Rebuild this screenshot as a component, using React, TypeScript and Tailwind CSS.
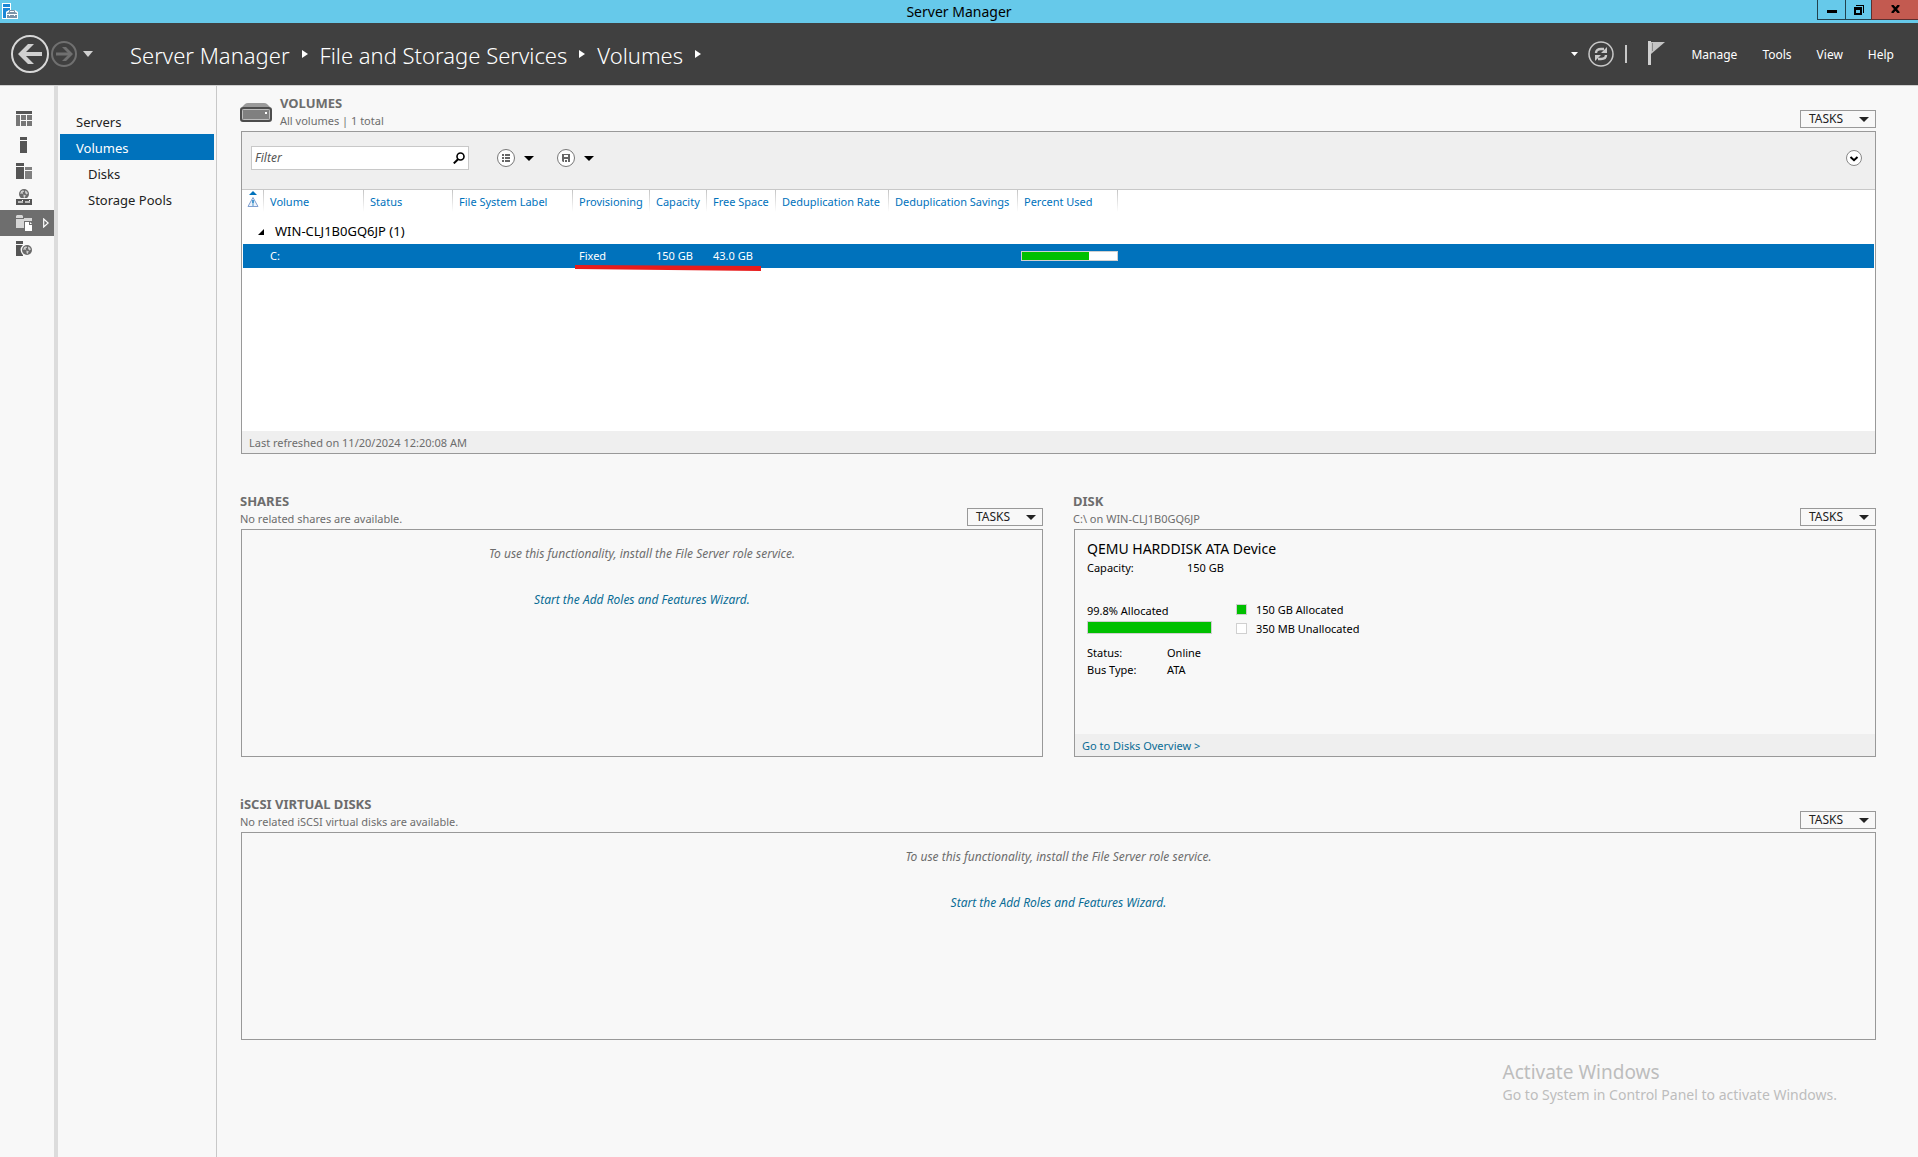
import React from 'react'

interface NavItem {
  label: string
  nested?: boolean
  active?: boolean
}

const navItems: NavItem[] = [
  { label: 'Servers' },
  { label: 'Volumes', active: true },
  { label: 'Disks', nested: true },
  { label: 'Storage Pools', nested: true },
]

const breadcrumbs = ['Server Manager', 'File and Storage Services', 'Volumes']

const menus = ['Manage', 'Tools', 'View', 'Help']

const columns = [
  { label: 'Volume', width: 'w-[100px]' },
  { label: 'Status', width: 'w-[89px]' },
  { label: 'File System Label', width: 'w-[120px]' },
  { label: 'Provisioning', width: 'w-[77px]' },
  { label: 'Capacity', width: 'w-[57px]' },
  { label: 'Free Space', width: 'w-[69px]' },
  { label: 'Deduplication Rate', width: 'w-[113px]' },
  { label: 'Deduplication Savings', width: 'w-[129px]' },
  { label: 'Percent Used', width: 'w-[100px]' },
]

const volume = {
  name: 'C:',
  provisioning: 'Fixed',
  capacity: '150 GB',
  freeSpace: '43.0 GB',
  percentUsed: 71,
}

const Caret = ({ className = '' }: { className?: string }) => (
  <svg width="10" height="5" viewBox="0 0 10 5" className={className} fill="currentColor">
    <path d="M0 0h10L5 5z" />
  </svg>
)

const Globe = ({ cx, cy, r }: { cx: number; cy: number; r: number }) => (
  <g>
    <circle cx={cx} cy={cy} r={r} fill="#6a6a6a" />
    <path
      transform={`translate(${cx - 5} ${cy - 5})`}
      d="M2 2.2l2.2-1 1 1.3-1.6 1L4 5 2.6 4.6 1.2 5zM6 1.6l2.2 1.2.6 2-1.4.6L6.2 4zM4.4 5.4l2.4.8L5.6 9l-1-.8z"
      fill="#cfcfcf"
    />
  </g>
)

const DashboardIcon = () => (
  <svg width="16" height="16" viewBox="0 0 16 16">
    <path d="M0 0h16v3H0z" fill="#555" />
    <path d="M0 4h4v11H0zM5 4h5v5H5zM11 4h5v5h-5zM5 10h5v5H5zM11 10h5v5h-5z" fill="#777" />
  </svg>
)

const LocalServerIcon = () => (
  <svg width="16" height="16" viewBox="0 0 16 16" fill="#555">
    <path d="M4 0h7v3H4zM4 4h7v12H4z" />
  </svg>
)

const AllServersIcon = () => (
  <svg width="16" height="16" viewBox="0 0 16 16">
    <path d="M0 0h8v3H0zM0 4h8v12H0z" fill="#555" />
    <path d="M9 4h7v3H9zM9 8h7v8H9z" fill="#808080" />
  </svg>
)

const DhcpIcon = () => (
  <svg width="16" height="16" viewBox="0 0 16 16">
    <Globe cx={8} cy={5} r={5} />
    <path d="M0 9h16v7H0z" fill="#f8f8f8" />
    <path d="M0 10h16v6H0z" fill="#555" />
    <path d="M2 12h5v2H2zM9 12h5v2H9z" fill="#bbb" />
    <path d="M6 11h1v1H6zM13 11h1v1h-1z" fill="#fff" />
  </svg>
)

const FileStorageIcon = () => (
  <svg width="16" height="16" viewBox="0 0 16 16">
    <path d="M0 1l1-1h5l1 1v2H0zM0 4h8V3h8v10H0z" fill="#d6d6d6" />
    <path d="M8 6h8v10H8z" fill="#6e6e6e" />
    <path d="M9 7h4v3h3v6H9z" fill="#fff" />
    <path d="M14 7l2 2h-2z" fill="#fff" />
  </svg>
)

const RemoteIcon = () => (
  <svg width="16" height="16" viewBox="0 0 16 16">
    <path d="M0 0h7v3H0zM0 4h7v11H0z" fill="#555" />
    <circle cx="11" cy="9" r="6.4" fill="#f8f8f8" />
    <Globe cx={11} cy={9} r={5} />
  </svg>
)

const railItems = [
  { label: 'Dashboard', Icon: DashboardIcon },
  { label: 'Local Server', Icon: LocalServerIcon },
  { label: 'All Servers', Icon: AllServersIcon },
  { label: 'DHCP', Icon: DhcpIcon },
  { label: 'File and Storage Services', Icon: FileStorageIcon, active: true },
  { label: 'Remote Services', Icon: RemoteIcon },
]

const TitleBar = () => (
  <div className="grid h-[23px] grid-cols-[1fr_auto_1fr] bg-[#66c9ea]">
    <svg width="16" height="16" viewBox="0 0 16 16" className="mt-[3px] ml-[2px]">
      <path d="M0 0h9v7h3l4 3v6H0z" fill="#fff" />
      <path d="M1 1h7v3H1zM1 5h7v2L4 9v6H1z" fill="#1b87d6" />
      <path d="M4 9l3-2h6l3 2v7H4z" fill="#fff" />
      <path d="M5 10l2-1h6l2 1v1H5zM5 12h10v3H5z" fill="#7a93a8" />
      <path d="M7.500 9V7.500h5V9" stroke="#7a93a8" fill="none" />
      <path d="M7 11h1v2H7zM12 11h1v2h-1z" fill="#fff" />
    </svg>
    <span className="text-[14px] leading-6 text-black">Server Manager</span>
    <div className="flex items-start justify-end">
      <button aria-label="Minimize" className="flex h-5 w-7 items-center justify-center border-b border-l border-[#22424d]">
        <svg width="10" height="3" viewBox="0 0 10 3" className="mt-1">
          <path d="M0 0h10v3H0z" />
        </svg>
      </button>
      <button aria-label="Restore" className="flex h-5 w-[26px] items-center justify-center border-b border-l border-[#22424d]">
        <svg width="10" height="10" viewBox="0 0 10 10">
          <path d="M2 0h8v8H9V1H2z" />
          <path d="M0 2h8v8H0zM2 5v3h4V5z" fillRule="evenodd" />
        </svg>
      </button>
      <button aria-label="Close" className="flex h-5 w-[47px] items-center justify-center border-b border-l border-[#5b2f30] bg-[#c35a50]">
        <svg width="9" height="8" viewBox="0 0 9 8" className="mb-px">
          <path d="M1 0l7 8M8 0L1 8" stroke="#000" strokeWidth="2.400" />
        </svg>
      </button>
    </div>
  </div>
)

const Header = () => (
  <header className="flex h-[63px] items-center border-b border-[#d0d0d0] bg-[#404040] text-white">
    <button aria-label="Back" className="ml-[11px]">
      <svg width="38" height="38" viewBox="0 0 38 38" fill="none">
        <circle cx="19" cy="19" r="18" stroke="#d8d8d8" strokeWidth="2" />
        <path d="M9 19h22" stroke="#d0d0d0" strokeWidth="4" />
        <path d="M17 9h6L13 19l10 10h-6L7 19z" fill="#d0d0d0" />
      </svg>
    </button>
    <button aria-label="Forward" className="ml-[2px]">
      <svg width="26" height="26" viewBox="0 0 26 26" fill="none">
        <circle cx="13" cy="13" r="12" stroke="#707070" strokeWidth="2" />
        <path d="M5 13h14" stroke="#707070" strokeWidth="3" />
        <path d="M11 6h4l7 7-7 7h-4l7-7z" fill="#707070" />
      </svg>
    </button>
    <button aria-label="History" className="ml-[6px]">
      <svg width="10" height="6" viewBox="0 0 10 6" fill="#d0d0d0">
        <path d="M0 0h10L5 6z" />
      </svg>
    </button>
    <nav aria-label="Breadcrumb" className="ml-[37px] flex items-center gap-3 pt-px text-[22px] font-light">
      {breadcrumbs.map(crumb => (
        <React.Fragment key={crumb}>
          <a href="#" className="leading-8 whitespace-nowrap">{crumb}</a>
          <svg width="6" height="8" viewBox="0 0 6 8" fill="#fff" className="mb-[2px]">
            <path d="M0 0l6 4-6 4z" />
          </svg>
        </React.Fragment>
      ))}
    </nav>
    <div className="ml-auto flex items-center">
      <button aria-label="Refresh options">
        <svg width="7" height="4" viewBox="0 0 7 4" fill="#fff">
          <path d="M0 0h7L3.500 4z" />
        </svg>
      </button>
      <button aria-label="Refresh" className="ml-[10px]">
        <svg width="26" height="26" viewBox="0 0 26 26" fill="none">
          <circle cx="13" cy="13" r="12" stroke="#c8c8c8" strokeWidth="1.500" />
          <path d="M8 12c0-3 2-4 5-4h3M18 14c0 3-2 4-5 4h-3" stroke="#c8c8c8" strokeWidth="2.400" />
          <path d="M19 6v6h-6zM7 20v-6h6z" fill="#c8c8c8" />
        </svg>
      </button>
      <span className="ml-[11px] h-[18px] w-[2px] bg-[#c8c8c8]" />
      <button aria-label="Notifications" className="ml-[21px]">
        <svg width="17" height="24" viewBox="0 0 17 24" className="mb-[3px]">
          <path d="M0 0h3v24H0z" fill="#d0d0d0" />
          <path d="M3 1h14L3 13z" fill="#c4c4c4" />
          <path d="M4.500 2v8" stroke="#8a8a8a" />
        </svg>
      </button>
      <div className="mr-6 ml-[26px] flex gap-[25px] pt-px text-[12px]">
        {menus.map(menu => (
          <button key={menu}>{menu}</button>
        ))}
      </div>
    </div>
  </header>
)

const Rail = () => (
  <nav aria-label="Server roles" className="w-[58px] shrink-0 border-r-4 border-[#dcdcdc] pt-5">
    {railItems.map(({ label, Icon, active }) => (
      <a
        key={label}
        href="#"
        aria-label={label}
        className={`flex h-[26px] items-center pl-4 ${active ? 'bg-[#6e6e6e]' : ''}`}
      >
        <Icon />
        {active && (
          <svg width="6" height="10" viewBox="0 0 6 10" fill="none" className="ml-[11px]">
            <path d="M.7 1l4.500 4L.7 9z" stroke="#fff" strokeWidth="1.200" />
          </svg>
        )}
      </a>
    ))}
  </nav>
)

const SideNav = () => (
  <nav aria-label="File and Storage Services" className="w-[159px] shrink-0 border-r border-[#c8c8c8] px-[2px] pt-[22px]">
    {navItems.map(item => (
      <a
        key={item.label}
        href="#"
        className={`block h-[26px] text-[13px] leading-7 ${item.nested ? 'pl-7' : 'pl-4'} ${
          item.active ? 'bg-[#0072bc] text-white' : 'text-[#222]'
        }`}
      >
        {item.label}
      </a>
    ))}
  </nav>
)

const SectionHeading = ({
  title,
  subtitle,
  icon,
}: {
  title: string
  subtitle: string
  icon?: React.ReactNode
}) => (
  <div className="flex h-[37px] items-end">
    {icon}
    <div className="self-start text-[#6d6d6d]">
      <h2 className="text-[13px] leading-[18px] font-bold">{title}</h2>
      <p className="text-[11px] leading-[17px]">{subtitle}</p>
    </div>
    <button className="mb-[3px] ml-auto flex h-[18px] w-[76px] items-center justify-between border border-[#999] pr-[6px] pl-2 text-[12px] text-[#222]">
      TASKS
      <Caret />
    </button>
  </div>
)

const DriveIcon = () => (
  <svg width="32" height="19" viewBox="0 0 32 19" className="mr-2 mb-[9px]">
    <path d="M2 4l3-3q1-1 3-1h16q2 0 3 1l3 3z" fill="#9a9a9a" />
    <rect x="1" y="5" width="30" height="13" rx="2" fill="#808080" stroke="#4d4d4d" strokeWidth="2" />
    <rect x="2.500" y="6.500" width="27" height="10" rx="1" fill="none" stroke="#bdbdbd" />
    <path d="M25 9h2v2h-2z" fill="#fff" />
  </svg>
)

const Toolbar = () => (
  <div className="flex h-[58px] items-center border-b border-[#c8c8c8] bg-[#efefef] pr-[13px] pb-[5px] pl-[9px]">
    <div className="flex h-6 w-[218px] items-center border border-[#c8c8c8] bg-white pr-[3px]">
      <input
        aria-label="Filter"
        placeholder="Filter"
        className="min-w-0 flex-1 pl-[3px] text-[12px] italic outline-none placeholder:text-[#555]"
      />
      <svg width="12" height="12" viewBox="0 0 12 12" fill="none" stroke="#000">
        <circle cx="7.500" cy="4.500" r="3.500" strokeWidth="1.600" />
        <path d="M5 7.200L.8 11.400" strokeWidth="2" />
      </svg>
    </div>
    <button aria-label="Saved searches" className="ml-7 flex items-center gap-[9px]">
      <svg width="18" height="18" viewBox="0 0 18 18">
        <circle cx="9" cy="9" r="8.500" fill="#fff" stroke="#777" />
        <path d="M5 5h2v2H5zM8 5h5v2H8zM5 8h2v2H5zM8 8h5v2H8zM5 11h2v2H5zM8 11h5v2H8z" fill="#666" />
      </svg>
      <Caret />
    </button>
    <button aria-label="Save search" className="ml-[23px] flex items-center gap-[9px]">
      <svg width="18" height="18" viewBox="0 0 18 18">
        <circle cx="9" cy="9" r="8.500" fill="#fff" stroke="#777" />
        <path d="M5 5h8v8H6l-1-1zM7 6v2h4V6zM7 10v3h1v-2h2v2h1v-3z" fillRule="evenodd" fill="#666" />
      </svg>
      <Caret />
    </button>
    <button aria-label="Expand" className="ml-auto">
      <svg width="16" height="16" viewBox="0 0 16 16" fill="none">
        <circle cx="8" cy="8" r="7.500" fill="#fff" stroke="#888" />
        <path d="M4.500 7L8 10.200 11.500 7" stroke="#000" strokeWidth="2" />
      </svg>
    </button>
  </div>
)

const headCell = 'bg-[linear-gradient(#c4c4c4,#fff)] bg-[length:1px_22px] bg-right-top bg-no-repeat'

const VolumesTable = () => (
  <div className="relative flex-1 px-px">
    <table className="w-full table-fixed border-collapse text-[11px]">
      <thead>
        <tr className="h-[25px] text-[#0072bc]">
          <th className={`w-[21px] p-0 align-top ${headCell}`}>
            <svg width="12" height="18" viewBox="0 0 12 18" fill="none" aria-label="Alerts" className="ml-1">
              <path d="M2 5l4-4 4 4z" fill="#0072bc" />
              <path d="M6 7.500l5 9H1z" stroke="#7f9fd0" fill="#eef3fb" />
              <path d="M6 10v3.500M6 14.500v1" stroke="#0072bc" strokeWidth="1.400" />
            </svg>
          </th>
          {columns.map(column => (
            <th key={column.label} className={`${column.width} pl-[6px] text-left font-normal whitespace-nowrap ${headCell}`}>
              {column.label}
            </th>
          ))}
          <th />
        </tr>
      </thead>
      <tbody>
        <tr className="h-[29px]">
          <td />
          <td colSpan={10} className="text-[13px] text-black">
            <button className="flex items-center gap-[11px] pt-1">
              <svg width="6" height="6" viewBox="0 0 6 6" className="-ml-[6px]">
                <path d="M6 0v6H0z" />
              </svg>
              WIN-CLJ1B0GQ6JP (1)
            </button>
          </td>
        </tr>
        <tr className="h-6 bg-[#0072bc] text-white">
          <td />
          <td className="pl-[6px]">{volume.name}</td>
          <td />
          <td />
          <td className="pl-[6px]">{volume.provisioning}</td>
          <td className="pl-[6px]">{volume.capacity}</td>
          <td className="pl-[6px]">{volume.freeSpace}</td>
          <td />
          <td />
          <td className="pl-[3px]">
            <div className="h-[10px] border border-[#d0d0d0] bg-white">
              <div className="h-full bg-[#00c000]" style={{ width: `${volume.percentUsed}%` }} />
            </div>
          </td>
          <td />
        </tr>
      </tbody>
    </table>
    <svg width="186" height="6" viewBox="0 0 186 6" className="absolute top-[75px] left-[333px]">
      <path d="M0 0l186 1v5L0 4z" fill="#e81c1c" />
    </svg>
  </div>
)

const EmptyPanel = ({ className }: { className: string }) => (
  <div className={`ml-px flex flex-col items-center gap-[29px] border border-[#999] pt-[15px] text-[12px] leading-[17px] italic ${className}`}>
    <p className="text-[#6d6d6d]">To use this functionality, install the File Server role service.</p>
    <a href="#" className="text-[#0a6c95]">Start the Add Roles and Features Wizard.</a>
  </div>
)

const DiskPanel = () => (
  <div className="ml-px flex min-h-[228px] flex-col border border-[#999] text-[11px] leading-[17px] text-black">
    <div className="flex-1 px-3 pt-2">
      <h3 className="text-[14px] leading-[21px]">QEMU HARDDISK ATA Device</h3>
      <dl className="grid grid-cols-[100px_auto]">
        <dt>Capacity:</dt>
        <dd>150 GB</dd>
      </dl>
      <div className="mt-6 flex gap-6">
        <div className="w-[125px]">
          <p className="leading-[21px]">99.8% Allocated</p>
          <div className="h-[13px] border border-[#d0d0d0] bg-white">
            <div className="h-full bg-[#00c000]" style={{ width: '99.8%' }} />
          </div>
        </div>
        <ul>
          <li className="flex h-[19px] items-center gap-[9px]">
            <span className="h-[11px] w-[11px] border border-[#d0d0d0] bg-[#00c000]" />
            150 GB Allocated
          </li>
          <li className="flex h-[19px] items-center gap-[9px]">
            <span className="h-[11px] w-[11px] border border-[#d0d0d0] bg-white" />
            350 MB Unallocated
          </li>
        </ul>
      </div>
      <dl className="mt-[6px] grid grid-cols-[80px_auto]">
        <dt>Status:</dt>
        <dd>Online</dd>
        <dt>Bus Type:</dt>
        <dd>ATA</dd>
      </dl>
    </div>
    <div className="bg-[#efefef] px-[7px] pt-[3px] pb-[2px]">
      <a href="#" className="text-[#0a6c95]">Go to Disks Overview &gt;</a>
    </div>
  </div>
)

const App: React.FC = () => {
  return (
    <div className="relative flex min-h-screen flex-col bg-[#f8f8f8] font-['Noto_Sans','Open_Sans',sans-serif]">
      <TitleBar />
      <Header />
      <div className="flex flex-1">
        <Rail />
        <SideNav />
        <main className="flex min-w-0 flex-1 flex-col gap-[38px] pt-2 pr-[42px] pl-[23px]">
          <section>
            <SectionHeading title="VOLUMES" subtitle="All volumes | 1 total" icon={<DriveIcon />} />
            <div className="ml-px flex min-h-[323px] flex-col border border-[#999] bg-white">
              <Toolbar />
              <VolumesTable />
              <p className="bg-[#efefef] px-[7px] pt-[3px] pb-px text-[11px] leading-[18px] text-[#6d6d6d]">
                Last refreshed on 11/20/2024 12:20:08 AM
              </p>
            </div>
          </section>

          <div className="grid grid-cols-2 gap-[30px]">
            <section>
              <SectionHeading title="SHARES" subtitle="No related shares are available." />
              <EmptyPanel className="min-h-[228px]" />
            </section>
            <section>
              <SectionHeading title="DISK" subtitle="C:\ on WIN-CLJ1B0GQ6JP" />
              <DiskPanel />
            </section>
          </div>

          <section>
            <SectionHeading title="iSCSI VIRTUAL DISKS" subtitle="No related iSCSI virtual disks are available." />
            <EmptyPanel className="min-h-[208px]" />
          </section>
        </main>
      </div>

      {/* Activation watermark */}
      <div className="pointer-events-none absolute right-[81px] bottom-[51px] text-[#bdbdbd]">
        <p className="text-[19px] leading-6">Activate Windows</p>
        <p className="text-[14px] leading-[22px]">Go to System in Control Panel to activate Windows.</p>
      </div>
    </div>
  )
}

export default App
